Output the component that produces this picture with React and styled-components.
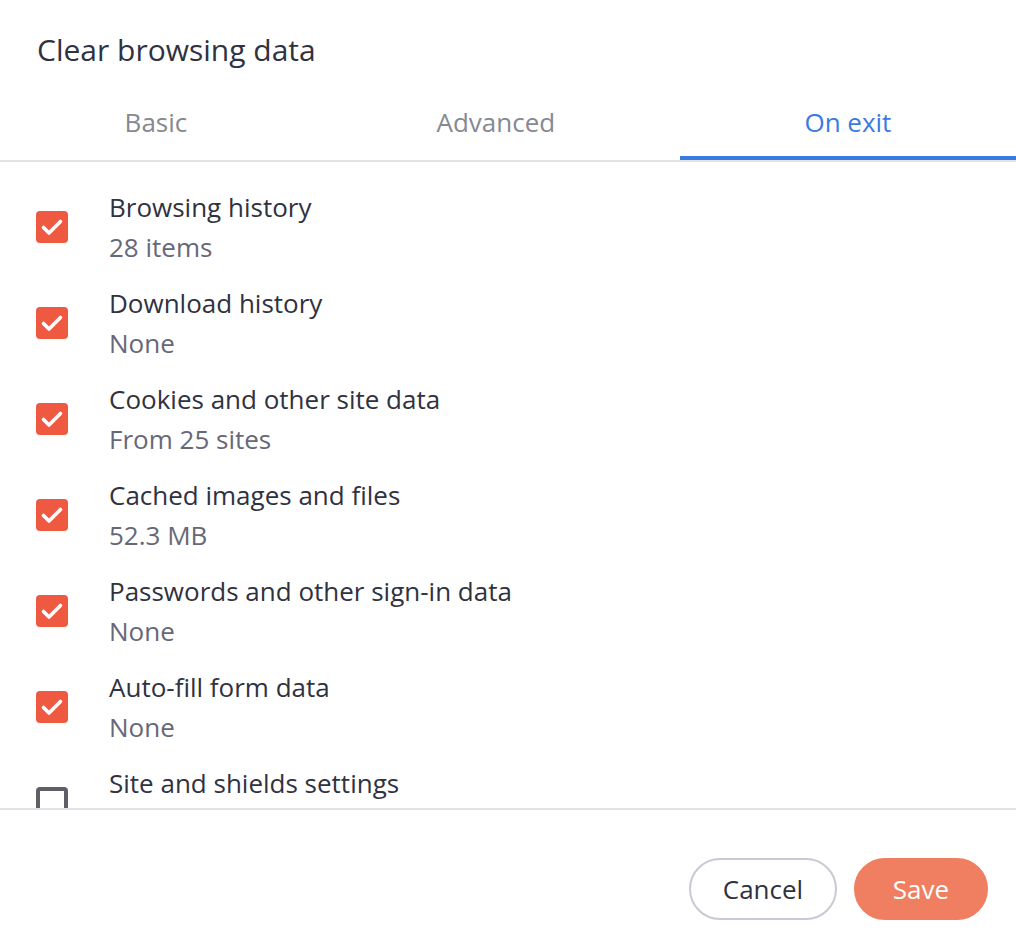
import styled, { createGlobalStyle } from 'styled-components'
import { useState } from 'react'

const COLORS = {
  TEXT: '#30323f',
  SUB: '#676877',
  TAB: '#868892',
  BLUE: '#3a7be2',
  LINE: '#e2e2e4',
  CHECK: '#ef5942',
  SAVE: '#ef7f60',
  BORDER: '#c9c9d3',
  BOX: '#5f6067',
}

const GlobalStyle = createGlobalStyle`
  html, body { margin: 0; padding: 0; background: #fff; }
  body {
    font-family: "Open Sans", Lato, sans-serif;
    color: ${COLORS.TEXT};
  }
`

const ITEMS = [
  { label: 'Browsing history', detail: '28 items', checked: true },
  { label: 'Download history', detail: 'None', checked: true },
  { label: 'Cookies and other site data', detail: 'From 25 sites', checked: true },
  { label: 'Cached images and files', detail: '52.3 MB', checked: true },
  { label: 'Passwords and other sign-in data', detail: 'None', checked: true },
  { label: 'Auto-fill form data', detail: 'None', checked: true },
  { label: 'Site and shields settings', detail: 'None', checked: false },
  { label: 'Hosted app data', detail: 'None', checked: false },
]

const TABS = ['Basic', 'Advanced', 'On exit']

const CheckMark = () => (
  <svg width="24" height="18" viewBox="0 0 24 18" fill="none">
    <path d="M3.5 9.5l5.5 5.5L20.5 3.5" stroke="#fff" strokeWidth="3.6" strokeLinecap="round" strokeLinejoin="round" />
  </svg>
)

const App = () => {
  const [active, setActive] = useState(2)
  const [checks, setChecks] = useState(ITEMS.map(i => i.checked))

  const toggle = idx => setChecks(c => c.map((v, i) => i === idx ? !v : v))

  return (
    <>
      <GlobalStyle />
      <Dialog>
        <Title>Clear browsing data</Title>
        <TabBar>
          {TABS.map((tab, i) => (
            <Tab key={tab} $active={i === active} onClick={() => setActive(i)}>{tab}</Tab>
          ))}
        </TabBar>
        <List>
          {ITEMS.map((item, i) => (
            <Row key={item.label} onClick={() => toggle(i)}>
              <Box $checked={checks[i]}>{checks[i] && <CheckMark />}</Box>
              <Texts>
                <Label>{item.label}</Label>
                <Detail>{item.detail}</Detail>
              </Texts>
            </Row>
          ))}
        </List>
        <Footer>
          <Button>Cancel</Button>
          <Button $primary>Save</Button>
        </Footer>
      </Dialog>
    </>
  )
}

const Dialog = styled.div`
  width: 1016px;
  height: 948px;
  display: flex;
  flex-direction: column;
  background: #fff;
`

const Title = styled.h1`
  margin: 0;
  padding: 30px 37px 0;
  height: 84px;
  flex-shrink: 0;
  box-sizing: border-box;
  font-size: 30px;
  line-height: 40px;
  font-weight: 400;
  color: ${COLORS.TEXT};
`

const TabBar = styled.div`
  display: flex;
  height: 78px;
  flex-shrink: 0;
  border-bottom: 2px solid ${COLORS.LINE};
  box-sizing: border-box;
`

const Tab = styled.div`
  flex: 1 1 auto;
  display: flex;
  align-items: center;
  justify-content: center;
  font-size: 26px;
  color: ${({ $active }) => $active ? COLORS.BLUE : COLORS.TAB};
  box-shadow: ${({ $active }) => $active ? `inset 0 -4px 0 ${COLORS.BLUE}` : 'none'};
  cursor: pointer;
`

const List = styled.div`
  flex: 1;
  overflow: hidden;
  padding-top: 17px;
  border-bottom: 2px solid ${COLORS.LINE};
`

const Row = styled.div`
  height: 96px;
  display: flex;
  align-items: center;
  padding-left: 36px;
  cursor: pointer;
`

const Box = styled.div`
  width: 32px;
  height: 32px;
  box-sizing: border-box;
  border-radius: 4px;
  flex-shrink: 0;
  display: flex;
  align-items: center;
  justify-content: center;
  background: ${({ $checked }) => $checked ? COLORS.CHECK : '#fff'};
  border: ${({ $checked }) => $checked ? 'none' : `4px solid ${COLORS.BOX}`};
`

const Texts = styled.div`
  margin-left: 41px;
  display: flex;
  flex-direction: column;
`

const Label = styled.div`
  font-size: 26px;
  line-height: 40px;
  color: ${COLORS.TEXT};
`

const Detail = styled(Label)`
  color: ${COLORS.SUB};
`

const Footer = styled.div`
  height: 138px;
  flex-shrink: 0;
  display: flex;
  align-items: center;
  justify-content: flex-end;
  gap: 17px;
  padding: 20px 28px 0 0;
  box-sizing: border-box;
`

const Button = styled.button`
  height: 62px;
  padding: 0 28px;
  border-radius: 31px;
  font-family: inherit;
  font-size: 26px;
  cursor: pointer;
  background: ${({ $primary }) => $primary ? COLORS.SAVE : '#fff'};
  color: ${({ $primary }) => $primary ? '#fff' : COLORS.TEXT};
  border: 2px solid ${({ $primary }) => $primary ? COLORS.SAVE : COLORS.BORDER};
  min-width: ${({ $primary }) => $primary ? '134px' : '148px'};
`

export default App
